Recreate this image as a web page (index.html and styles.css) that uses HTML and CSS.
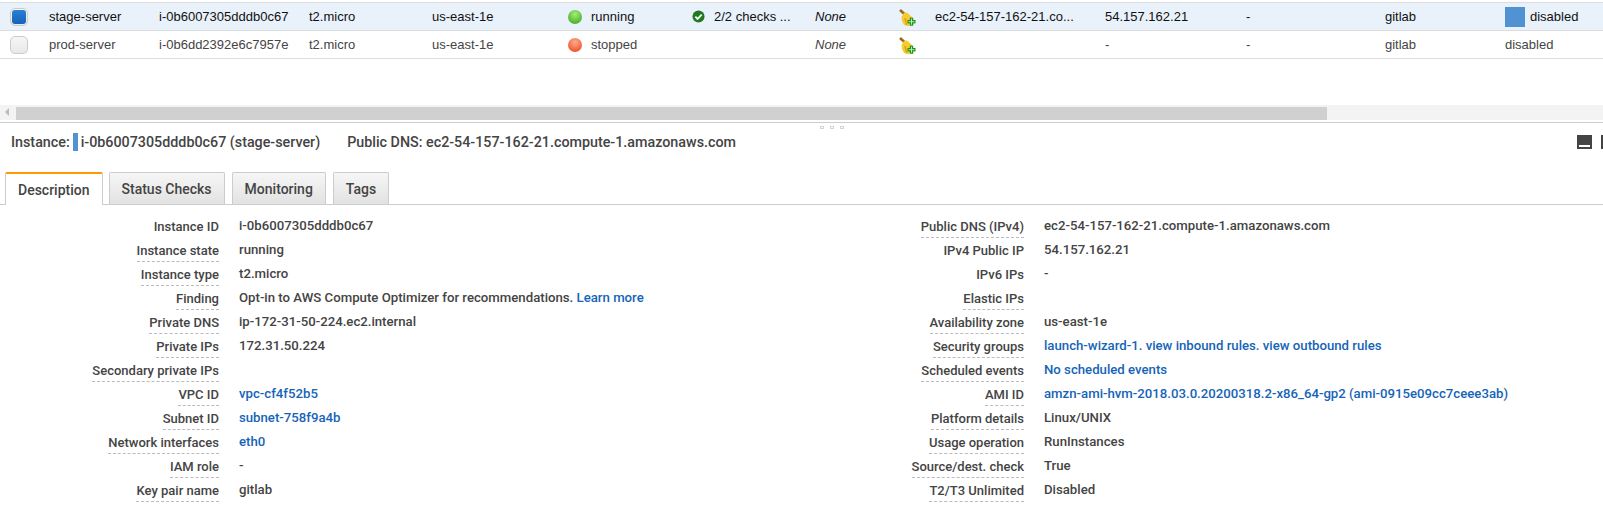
FILE: index.html
```html
<!DOCTYPE html>
<html lang="en">
<head>
  <meta charset="UTF-8" />
  <title>EC2 Instances</title>
  <link rel="stylesheet" href="styles.css">
</head>
<body>
  <div class="instances">
    <div class="row selected">
      <div class="cell"><span class="check on"></span></div>
      <div class="cell">stage-server</div>
      <div class="cell">i-0b6007305dddb0c67</div>
      <div class="cell">t2.micro</div>
      <div class="cell">us-east-1e</div>
      <div class="cell"><span class="dot green"></span>running</div>
      <div class="cell">
        <svg class="ok" viewBox="0 0 14 14"><circle cx="7" cy="7" r="6.5" fill="#1f7a1f"/><path d="M3.6 7.2l2.4 2.4 4.4-4.6" fill="none" stroke="#fff" stroke-width="2"/></svg>
        2/2 checks ...
      </div>
      <div class="cell none">None</div>
      <div class="cell">
        <svg class="broom" viewBox="0 0 17 17"><path d="M1 1l5 4.5" stroke="#9a6a1c" stroke-width="2.6"/><path d="M5 4l3-.5 5 4.5 1 4-1 4-4 1-4-1-2-4-.5-4z" fill="#f5cc2e"/><path d="M5 9l2 7 1.5.5-1.5-7z" fill="#d9a520"/><rect x="8.5" y="11" width="8" height="3.4" fill="#1f8f1f"/><rect x="10.8" y="8.7" width="3.4" height="8" fill="#1f8f1f"/><rect x="9.5" y="12.2" width="6" height="1" fill="#b5f0a5"/><rect x="12" y="9.7" width="1" height="6" fill="#b5f0a5"/></svg>
      </div>
      <div class="cell">ec2-54-157-162-21.co...</div>
      <div class="cell">54.157.162.21</div>
      <div class="cell">-</div>
      <div class="cell">gitlab</div>
      <div class="cell"><span class="swatch"></span>disabled</div>
    </div>
    <div class="row">
      <div class="cell"><span class="check"></span></div>
      <div class="cell">prod-server</div>
      <div class="cell">i-0b6dd2392e6c7957e</div>
      <div class="cell">t2.micro</div>
      <div class="cell">us-east-1e</div>
      <div class="cell"><span class="dot red"></span>stopped</div>
      <div class="cell"></div>
      <div class="cell none">None</div>
      <div class="cell">
        <svg class="broom" viewBox="0 0 17 17"><path d="M1 1l5 4.5" stroke="#9a6a1c" stroke-width="2.6"/><path d="M5 4l3-.5 5 4.5 1 4-1 4-4 1-4-1-2-4-.5-4z" fill="#f5cc2e"/><path d="M5 9l2 7 1.5.5-1.5-7z" fill="#d9a520"/><rect x="8.5" y="11" width="8" height="3.4" fill="#1f8f1f"/><rect x="10.8" y="8.7" width="3.4" height="8" fill="#1f8f1f"/><rect x="9.5" y="12.2" width="6" height="1" fill="#b5f0a5"/><rect x="12" y="9.7" width="1" height="6" fill="#b5f0a5"/></svg>
      </div>
      <div class="cell"></div>
      <div class="cell">-</div>
      <div class="cell">-</div>
      <div class="cell">gitlab</div>
      <div class="cell">disabled</div>
    </div>
  </div>

  <div class="scrollbar">
    <div class="arrow"></div>
    <div class="thumb"></div>
  </div>

  <div class="splitter">
    <div class="grip"><span></span><span></span><span></span></div>
  </div>

  <div class="summary">
    <div class="summary-text">
      <span>Instance:</span>
      <span class="marker"></span>
      <span>i-0b6007305dddb0c67 (stage-server)</span>
      <span class="public-dns">Public DNS: ec2-54-157-162-21.compute-1.amazonaws.com</span>
    </div>
    <div class="panel-icons"><span class="panel-icon"></span><span class="panel-icon"></span></div>
  </div>

  <div class="tabs">
    <div class="tab active">Description</div>
    <div class="tab">Status Checks</div>
    <div class="tab">Monitoring</div>
    <div class="tab">Tags</div>
  </div>

  <div class="details">
    <div class="column">
      <div class="item"><span class="label plain">Instance ID</span><span class="value">i-0b6007305dddb0c67</span></div>
      <div class="item"><span class="label">Instance state</span><span class="value">running</span></div>
      <div class="item"><span class="label">Instance type</span><span class="value">t2.micro</span></div>
      <div class="item"><span class="label">Finding</span><span class="value">Opt-in to AWS Compute Optimizer for recommendations. <a href="#">Learn more</a></span></div>
      <div class="item"><span class="label">Private DNS</span><span class="value">ip-172-31-50-224.ec2.internal</span></div>
      <div class="item"><span class="label">Private IPs</span><span class="value">172.31.50.224</span></div>
      <div class="item"><span class="label">Secondary private IPs</span><span class="value"></span></div>
      <div class="item"><span class="label">VPC ID</span><span class="value"><a href="#">vpc-cf4f52b5</a></span></div>
      <div class="item"><span class="label">Subnet ID</span><span class="value"><a href="#">subnet-758f9a4b</a></span></div>
      <div class="item"><span class="label">Network interfaces</span><span class="value"><a href="#">eth0</a></span></div>
      <div class="item"><span class="label">IAM role</span><span class="value">-</span></div>
      <div class="item"><span class="label">Key pair name</span><span class="value">gitlab</span></div>
    </div>
    <div class="column">
      <div class="item"><span class="label">Public DNS (IPv4)</span><span class="value">ec2-54-157-162-21.compute-1.amazonaws.com</span></div>
      <div class="item"><span class="label plain">IPv4 Public IP</span><span class="value">54.157.162.21</span></div>
      <div class="item"><span class="label plain">IPv6 IPs</span><span class="value">-</span></div>
      <div class="item"><span class="label">Elastic IPs</span><span class="value"></span></div>
      <div class="item"><span class="label">Availability zone</span><span class="value">us-east-1e</span></div>
      <div class="item"><span class="label">Security groups</span><span class="value"><a href="#">launch-wizard-1</a><a href="#">. view inbound rules</a><a href="#">. view outbound rules</a></span></div>
      <div class="item"><span class="label">Scheduled events</span><span class="value"><a href="#">No scheduled events</a></span></div>
      <div class="item"><span class="label">AMI ID</span><span class="value"><a href="#">amzn-ami-hvm-2018.03.0.20200318.2-x86_64-gp2 (ami-0915e09cc7ceee3ab)</a></span></div>
      <div class="item"><span class="label">Platform details</span><span class="value">Linux/UNIX</span></div>
      <div class="item"><span class="label">Usage operation</span><span class="value">RunInstances</span></div>
      <div class="item"><span class="label">Source/dest. check</span><span class="value">True</span></div>
      <div class="item"><span class="label">T2/T3 Unlimited</span><span class="value">Disabled</span></div>
    </div>
  </div>
</body>
</html>
```

FILE: styles.css
```css
html, body {
  margin: 0;
  height: 509px;
  overflow: hidden;
  background: #fff;
}

body {
  padding-top: 2px;
  box-sizing: border-box;
  color: #444;
  font-family: Roboto, "Liberation Sans", sans-serif;
}

/* instance table */
.instances {
  height: 103px;
  border-top: 1px solid #ddd;
  box-sizing: border-box;
  font-family: "Liberation Sans", Arial, sans-serif;
  font-size: 13px;
}

.row {
  display: grid;
  grid-template-columns: 49px 110px 150px 123px 136px 124px 123px 84px 36px 170px 141px 139px 120px 98px;
  height: 28px;
  box-sizing: border-box;
  border-bottom: 1px solid #ddd;
}

.row.selected {
  background: #e9f1fb;
  color: #111;
}

.cell {
  display: flex;
  align-items: center;
  white-space: nowrap;
}

.check {
  display: flex;
  align-items: center;
  justify-content: center;
  width: 16px;
  height: 16px;
  margin-left: 10px;
  border: 1px solid #ccc;
  border-radius: 5px;
  background: linear-gradient(#f6f6f6, #e8e8e8);
}

.check.on::after {
  content: "";
  width: 14px;
  height: 14px;
  border-radius: 3px;
  background: linear-gradient(#2a7fd8, #1463b8);
}

.dot {
  width: 14px;
  height: 14px;
  margin-right: 9px;
  border-radius: 50%;
}

.dot.green {
  background: radial-gradient(circle at 50% 30%, #a5ec7a, #4fb52c 75%);
}

.dot.red {
  background: radial-gradient(circle at 50% 30%, #ffac8c, #ee5a33 75%);
}

.ok {
  width: 13px;
  height: 13px;
  margin-right: 9px;
}

.none {
  font-style: italic;
}

.broom {
  width: 17px;
  height: 17px;
  margin-top: 2px;
}

.swatch {
  width: 20px;
  height: 20px;
  margin-right: 5px;
  background: #5092d2;
}

/* horizontal scrollbar */
.scrollbar {
  display: flex;
  align-items: flex-end;
  height: 15px;
  background: #f3f3f3;
}

.arrow {
  width: 0;
  height: 0;
  margin: 0 7px 4px 5px;
  border-top: 4px solid transparent;
  border-bottom: 4px solid transparent;
  border-right: 4px solid #bbb;
}

.thumb {
  width: 1311px;
  height: 13px;
  background: #d0d0d0;
}

/* split handle */
.splitter {
  position: relative;
  margin-top: 2px;
  border-top: 1px solid #ccc;
}

.grip {
  position: absolute;
  top: 3px;
  left: 820px;
  display: flex;
  gap: 6px;
}

.grip span {
  width: 4px;
  height: 3px;
  border: 1px solid #d4d4d4;
  box-sizing: border-box;
}

/* selected instance summary */
.summary {
  display: flex;
  justify-content: space-between;
  align-items: center;
  height: 38px;
  padding-left: 11px;
  font-size: 14.3px;
  font-weight: 500;
}

.summary-text {
  display: flex;
  align-items: center;
}

.marker {
  width: 5px;
  height: 18px;
  margin: 0 3px;
  background: #5092d2;
}

.public-dns {
  margin-left: 27px;
}

.panel-icons {
  display: flex;
  gap: 9px;
  width: 26px;
  overflow: hidden;
}

.panel-icon {
  flex: none;
  display: flex;
  align-items: flex-end;
  box-sizing: border-box;
  width: 15px;
  height: 14px;
  padding: 0 2px 2px;
  background: #444;
}

.panel-icon::after {
  content: "";
  width: 100%;
  height: 2px;
  background: #fff;
}

/* tabs */
.tabs {
  display: flex;
  gap: 7px;
  align-items: flex-end;
  height: 32px;
  margin-top: 11px;
  padding-left: 5px;
  border-bottom: 1px solid #ccc;
}

.tab {
  display: flex;
  align-items: center;
  box-sizing: border-box;
  height: 32px;
  padding: 0 12px;
  border: 1px solid #ccc;
  border-bottom: 0;
  border-radius: 2px 2px 0 0;
  background: linear-gradient(#f6f6f6, #e2e2e2);
  font-size: 14px;
  font-weight: 500;
}

.tab.active {
  height: 33px;
  margin-right: -1px;
  margin-bottom: -1px;
  border-top: 2px solid #f90;
  background: #fff;
}

/* description grid */
.details {
  display: grid;
  grid-template-columns: 805px 1fr;
  padding-top: 10px;
  font-size: 13px;
  font-weight: 500;
}

.item {
  display: grid;
  grid-template-columns: 219px 1fr;
  height: 24px;
  align-items: start;
}

.label {
  justify-self: end;
  margin-top: 4px;
  padding-bottom: 3px;
  border-bottom: 1px dashed #bbb;
  line-height: 15px;
}

.label.plain {
  border-bottom-color: transparent;
}

.value {
  margin-left: 20px;
  padding-top: 3px;
  font-size: 13.2px;
  line-height: 15px;
  white-space: nowrap;
}

a {
  color: #1664b8;
  text-decoration: none;
}
```
